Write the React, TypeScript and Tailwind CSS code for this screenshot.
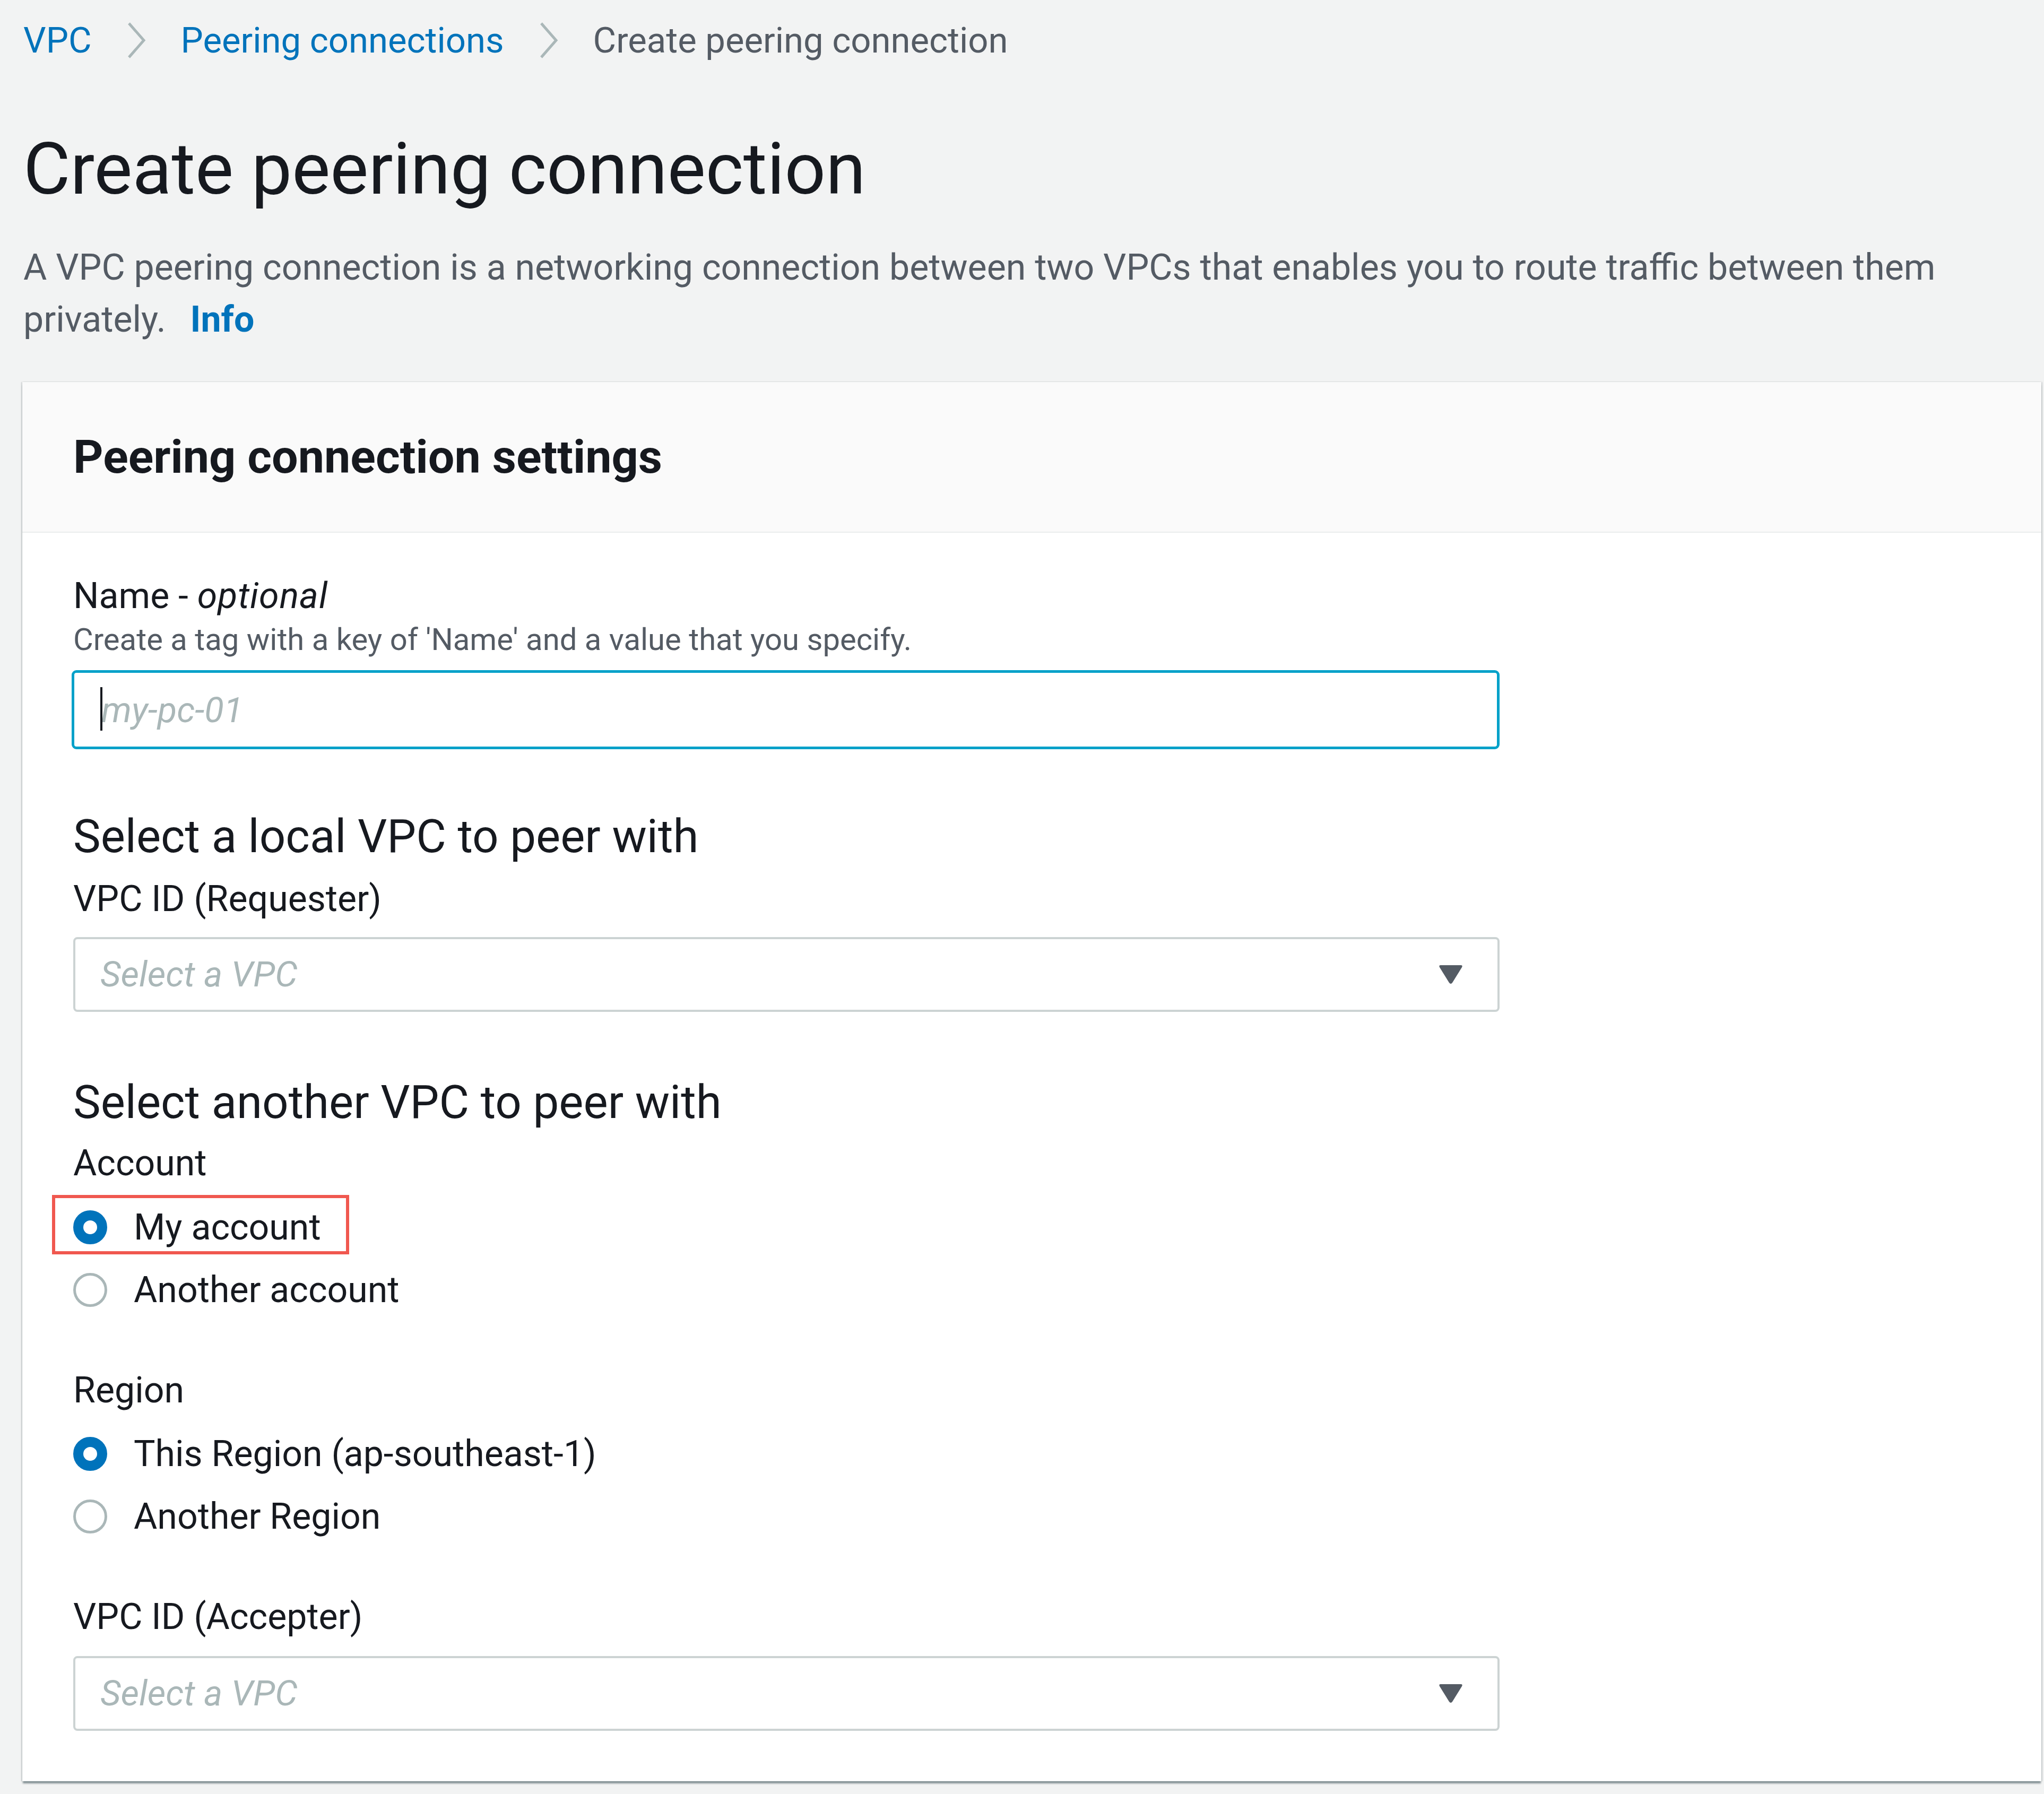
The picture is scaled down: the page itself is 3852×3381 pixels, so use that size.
import { ReactNode } from 'react';

const font = { fontFamily: 'Roboto, "Liberation Sans", sans-serif' };

const Chevron = () => (
  <svg width="40" height="72" viewBox="0 0 40 72" className="mx-[64px] shrink-0">
    <polyline points="6,4 34,36 6,68" fill="none" stroke="#aab7b8" strokeWidth="5" />
  </svg>
);

const Caret = () => (
  <svg width="48" height="40" viewBox="0 0 48 40" className="shrink-0">
    <path d="M5 2 H43 Q47 2 45 6 L27 35 Q24 39 21 35 L3 6 Q1 2 5 2 Z" fill="#545b64" />
  </svg>
);

const SelectBox = () => (
  <div className="w-[2688px] h-[141px] border-[4px] border-[#ccd3d3] rounded-[8px] bg-white flex items-center justify-between pl-[47px] pr-[64px]">
    <span className="text-[67px] italic text-[#aab7b8]">Select a VPC</span>
    <Caret />
  </div>
);

const Radio = ({ checked, children }: { checked?: boolean; children: ReactNode }) => (
  <div className="h-[118px] flex items-center">
    <span
      className={
        checked
          ? 'w-[64px] h-[64px] rounded-full bg-white border-[19px] border-[#0073bb] shrink-0'
          : 'w-[64px] h-[64px] rounded-full bg-white border-[5px] border-[#aab7b8] shrink-0'
      }
    />
    <span className="ml-[50px] text-[68px] text-[#16191f] leading-[88px]">{children}</span>
  </div>
);

export default function App() {
  return (
    <div style={font} className="w-[3852px] h-[3381px] bg-[#f2f3f3] overflow-hidden">
      {/* Breadcrumbs */}
      <nav className="pl-[44px] pt-[32px] h-[120px] flex items-center text-[67px] leading-[88px]">
        <span className="text-[#0073bb]">VPC</span>
        <Chevron />
        <span className="text-[#0073bb]">Peering connections</span>
        <Chevron />
        <span className="text-[#545b64]">Create peering connection</span>
      </nav>

      <h1 className="pl-[44px] mt-[119px] text-[136px] leading-[160px] text-[#16191f]">
        Create peering connection
      </h1>
      <div className="pl-[44px] mt-[56px] text-[68px] leading-[98px] text-[#545b64]">
        <p>A VPC peering connection is a networking connection between two VPCs that enables you to route traffic between them</p>
        <p className="flex gap-[46px]">
          <span>privately.</span>
          <span className="font-bold text-[#0073bb]">Info</span>
        </p>
      </div>

      {/* Panel */}
      <section className="ml-[42px] mt-[69px] w-[3805px] bg-white shadow-[0_5px_3px_-1px_rgba(0,28,36,0.45),-2px_0_2px_0_rgba(0,28,36,0.15),2px_0_2px_0_rgba(0,28,36,0.15)]">
        <header className="h-[284px] bg-[#fafafa] border-b-[2px] border-[#eaeded] px-[96px] flex items-center">
          <h2 className="text-[88px] font-bold text-[#16191f]">Peering connection settings</h2>
        </header>

        <div className="px-[96px] pt-[75px] pb-[95px] flex flex-col text-[#16191f]">
          <label className="text-[68px] leading-[88px]">
            Name - <em className="tracking-[1px]">optional</em>
          </label>
          <p className="text-[58px] leading-[76px] text-[#545b64]">
            Create a tag with a key of 'Name' and a value that you specify.
          </p>
          <div className="relative mt-[20px] -ml-[3px] w-[2691px]">
            <input
              readOnly
              placeholder="my-pc-01"
              className="w-full h-[149px] border-[5px] border-[#00a1c9] rounded-[9px] bg-white pl-[51px] text-[67px] outline-none placeholder:italic placeholder:text-[#aab7b8]"
            />
            <span className="absolute left-[54px] top-[32px] w-[4px] h-[82px] bg-[#16191f]" />
          </div>

          <h3 className="mt-[109px] text-[87px] leading-[110px]">Select a local VPC to peer with</h3>
          <label className="mt-[19px] text-[68px] leading-[88px]">VPC ID (Requester)</label>
          <div className="mt-[28px]">
            <SelectBox />
          </div>

          <h3 className="mt-[115px] text-[87px] leading-[110px]">Select another VPC to peer with</h3>
          <label className="mt-[16px] text-[68px] leading-[88px]">Account</label>
          <div className="mt-[18px] flex flex-col">
            <div className="relative">
              <span className="absolute -left-[40px] -top-[2px] w-[560px] h-[112px] border-[6px] border-[#f0584f]" />
              <Radio checked>My account</Radio>
            </div>
            <Radio>Another account</Radio>
          </div>

          <label className="mt-[86px] text-[68px] leading-[88px]">Region</label>
          <div className="mt-[17px] flex flex-col">
            <Radio checked>This Region (ap-southeast-1)</Radio>
            <Radio>Another Region</Radio>
          </div>

          <label className="mt-[86px] text-[68px] leading-[88px]">VPC ID (Accepter)</label>
          <div className="mt-[30px]">
            <SelectBox />
          </div>
        </div>
      </section>
    </div>
  );
}
